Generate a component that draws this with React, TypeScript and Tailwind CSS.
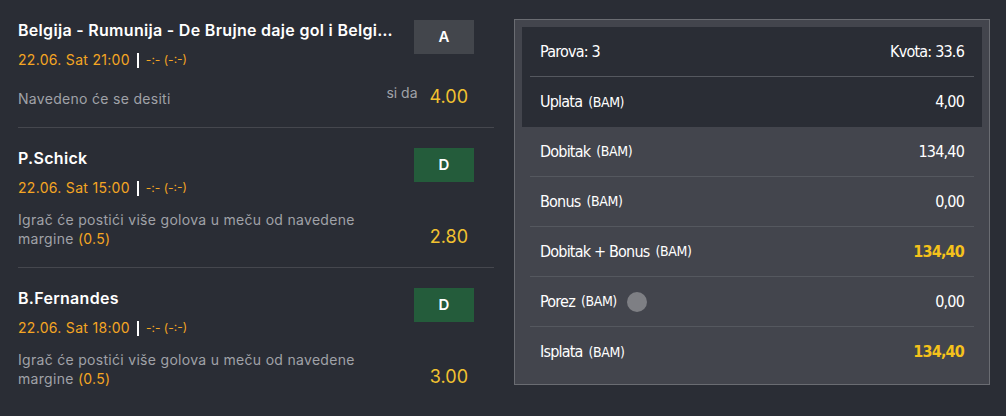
const leftFont = { fontFamily: 'Inter, "Noto Sans", sans-serif' };
const rightFont = {
	fontFamily: '"DejaVu Sans", sans-serif',
};

type Pick = {
	title: string;
	time: string;
	badge: string;
	badgeClass: string;
	desc: string;
	margin?: string;
	tip?: string;
	odds: string;
};

const picks: Pick[] = [
	{
		title: "Belgija - Rumunija - De Brujne daje gol i Belgija pobjeđuje",
		time: "22.06. Sat 21:00",
		badge: "A",
		badgeClass: "bg-[#43464c]",
		desc: "Navedeno će se desiti",
		tip: "si da",
		odds: "4.00",
	},
	{
		title: "P.Schick",
		time: "22.06. Sat 15:00",
		badge: "D",
		badgeClass: "bg-[#245c3b]",
		desc: "Igrač će postići više golova u meču od navedene margine",
		margin: "(0.5)",
		odds: "2.80",
	},
	{
		title: "B.Fernandes",
		time: "22.06. Sat 18:00",
		badge: "D",
		badgeClass: "bg-[#245c3b]",
		desc: "Igrač će postići više golova u meču od navedene margine",
		margin: "(0.5)",
		odds: "3.00",
	},
];

function PickRow({ pick, last }: { pick: Pick; last: boolean }) {
	return (
		<div
			className={`pt-5 pb-[19px] ${last ? "" : "border-b border-[#45474e]"}`}
		>
			<div className="flex items-start justify-between gap-5">
				<div className="min-w-0 flex-1">
					<div className="truncate text-[16px] leading-5 font-semibold tracking-[0.3px] text-white">
						{pick.title}
					</div>
					<div className="mt-[10px] flex items-center text-[14px] leading-5 text-[#f5a623]">
						<span className="tracking-[0.3px]">{pick.time}</span>
						<span className="mx-[7px] h-[15px] w-[2px] bg-white" />
						<span className="text-[12px]">-:- (-:-)</span>
					</div>
				</div>
				<div
					className={`mr-5 flex h-[34px] w-[60px] shrink-0 items-center justify-center text-[15px] font-semibold text-white ${pick.badgeClass}`}
				>
					{pick.badge}
				</div>
			</div>
			<div className="mt-3 flex min-h-[26px] items-end justify-between">
				<div className="w-[350px] text-[14px] leading-[19px] tracking-[0.3px] text-[#a0a2a8]">
					{pick.desc}
					{pick.margin && (
						<span className="text-[#f5a623]"> {pick.margin}</span>
					)}
				</div>
				<div className="mr-[26px] flex items-end">
					{pick.tip && (
						<span className="mb-[5px] mr-3 text-[14px] leading-5 text-[#a0a2a8]">
							{pick.tip}
						</span>
					)}
					<span className="text-[18px] leading-[22px] text-[#f2c230]">
						{pick.odds}
					</span>
				</div>
			</div>
		</div>
	);
}

function SumRow({
	label,
	unit,
	value,
	highlight,
	info,
	border = true,
}: {
	label: string;
	unit?: string;
	value: string;
	highlight?: boolean;
	info?: boolean;
	border?: boolean;
}) {
	return (
		<div
			className={`mx-2 flex items-center justify-between px-[10px] ${
				border ? "h-[50px] border-b border-[#55585f]" : "h-[50px]"
			}`}
		>
			<div className="flex items-center text-[16px] tracking-[-0.8px] text-white">
				<span>{label}</span>
				{unit && (
					<span className="ml-[6px] text-[14px] tracking-[-0.4px]">{unit}</span>
				)}
				{info && (
					<span className="ml-[10px] h-5 w-5 rounded-full bg-[#7e7f84]" />
				)}
			</div>
			<div
				className={`text-[16px] tracking-[-0.8px] ${highlight ? "font-bold text-[#f5c21b]" : "text-white"}`}
			>
				{value}
			</div>
		</div>
	);
}

export default function App() {
	return (
		<div className="flex h-[416px] w-[1006px] bg-[#2a2d35]">
			<div className="w-[494px] shrink-0 pl-[18px]" style={leftFont}>
				{picks.map((p, i) => (
					<PickRow key={i} pick={p} last={i === picks.length - 1} />
				))}
			</div>
			<div
				className="ml-5 mt-[19px] w-[476px] font-stretch-condensed"
				style={rightFont}
			>
				<div className="border border-[#6a6c72] bg-[#43454d] p-[7px]">
					<div className="bg-[#2a2d35]">
						<SumRow label="Parova: 3" value="Kvota: 33.6" />
						<SumRow label="Uplata" unit="(BAM)" value="4,00" border={false} />
					</div>
					<SumRow label="Dobitak" unit="(BAM)" value="134,40" />
					<SumRow label="Bonus" unit="(BAM)" value="0,00" />
					<SumRow label="Dobitak + Bonus" unit="(BAM)" value="134,40" highlight />
					<SumRow label="Porez" unit="(BAM)" value="0,00" info />
					<SumRow
						label="Isplata"
						unit="(BAM)"
						value="134,40"
						highlight
						border={false}
					/>
				</div>
			</div>
		</div>
	);
}
